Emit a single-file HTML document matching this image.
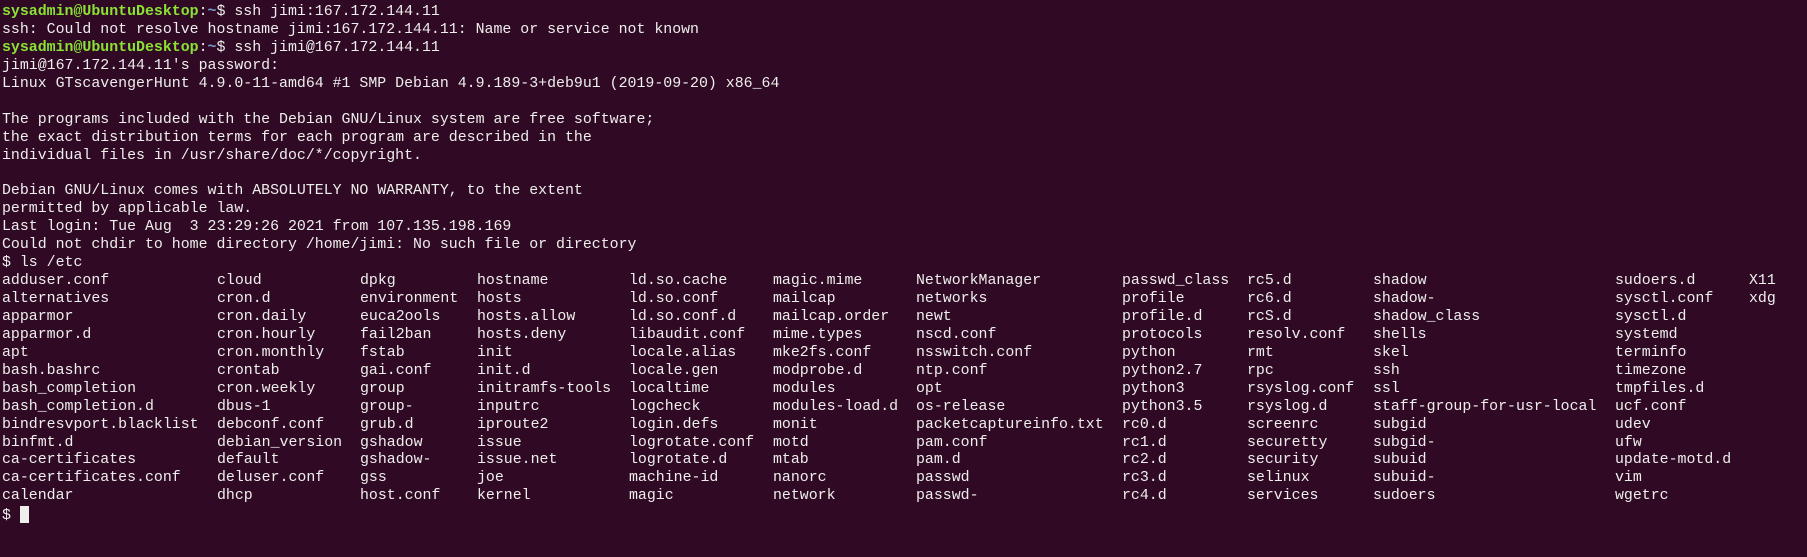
<!DOCTYPE html>
<html><head><meta charset="utf-8"><style>
html,body{margin:0;padding:0;background:#300a24;width:1807px;height:557px;overflow:hidden}
.t{position:absolute;left:2px;top:4px;font-family:"Liberation Mono",monospace;font-size:14.9px;line-height:17.95px;color:#eeeeec}
.t>div{white-space:pre;height:17.95px;position:relative}
.g{color:#8ae234;font-weight:bold}.b{color:#729fcf;font-weight:bold}
.r span{position:absolute;top:0}
.cur{display:inline-block;width:9px;height:17px;background:#eeeeec;vertical-align:-4px}
</style></head><body><div class="t"><div><span class="g">sysadmin@UbuntuDesktop</span>:<span class="b">~</span>$ ssh jimi:167.172.144.11</div><div>ssh: Could not resolve hostname jimi:167.172.144.11: Name or service not known</div><div><span class="g">sysadmin@UbuntuDesktop</span>:<span class="b">~</span>$ ssh jimi@167.172.144.11</div><div>jimi@167.172.144.11's password: </div><div>Linux GTscavengerHunt 4.9.0-11-amd64 #1 SMP Debian 4.9.189-3+deb9u1 (2019-09-20) x86_64</div><div> </div><div>The programs included with the Debian GNU/Linux system are free software;</div><div>the exact distribution terms for each program are described in the</div><div>individual files in /usr/share/doc/*/copyright.</div><div> </div><div>Debian GNU/Linux comes with ABSOLUTELY NO WARRANTY, to the extent</div><div>permitted by applicable law.</div><div>Last login: Tue Aug  3 23:29:26 2021 from 107.135.198.169</div><div>Could not chdir to home directory /home/jimi: No such file or directory</div><div>$ ls /etc</div>
<div class="r"><span style="left:0">adduser.conf</span><span style="left:215px">cloud</span><span style="left:358px">dpkg</span><span style="left:475px">hostname</span><span style="left:627px">ld.so.cache</span><span style="left:771px">magic.mime</span><span style="left:914px">NetworkManager</span><span style="left:1120px">passwd_class</span><span style="left:1245px">rc5.d</span><span style="left:1371px">shadow</span><span style="left:1613px">sudoers.d</span><span style="left:1747px">X11</span></div>
<div class="r"><span style="left:0">alternatives</span><span style="left:215px">cron.d</span><span style="left:358px">environment</span><span style="left:475px">hosts</span><span style="left:627px">ld.so.conf</span><span style="left:771px">mailcap</span><span style="left:914px">networks</span><span style="left:1120px">profile</span><span style="left:1245px">rc6.d</span><span style="left:1371px">shadow-</span><span style="left:1613px">sysctl.conf</span><span style="left:1747px">xdg</span></div>
<div class="r"><span style="left:0">apparmor</span><span style="left:215px">cron.daily</span><span style="left:358px">euca2ools</span><span style="left:475px">hosts.allow</span><span style="left:627px">ld.so.conf.d</span><span style="left:771px">mailcap.order</span><span style="left:914px">newt</span><span style="left:1120px">profile.d</span><span style="left:1245px">rcS.d</span><span style="left:1371px">shadow_class</span><span style="left:1613px">sysctl.d</span></div>
<div class="r"><span style="left:0">apparmor.d</span><span style="left:215px">cron.hourly</span><span style="left:358px">fail2ban</span><span style="left:475px">hosts.deny</span><span style="left:627px">libaudit.conf</span><span style="left:771px">mime.types</span><span style="left:914px">nscd.conf</span><span style="left:1120px">protocols</span><span style="left:1245px">resolv.conf</span><span style="left:1371px">shells</span><span style="left:1613px">systemd</span></div>
<div class="r"><span style="left:0">apt</span><span style="left:215px">cron.monthly</span><span style="left:358px">fstab</span><span style="left:475px">init</span><span style="left:627px">locale.alias</span><span style="left:771px">mke2fs.conf</span><span style="left:914px">nsswitch.conf</span><span style="left:1120px">python</span><span style="left:1245px">rmt</span><span style="left:1371px">skel</span><span style="left:1613px">terminfo</span></div>
<div class="r"><span style="left:0">bash.bashrc</span><span style="left:215px">crontab</span><span style="left:358px">gai.conf</span><span style="left:475px">init.d</span><span style="left:627px">locale.gen</span><span style="left:771px">modprobe.d</span><span style="left:914px">ntp.conf</span><span style="left:1120px">python2.7</span><span style="left:1245px">rpc</span><span style="left:1371px">ssh</span><span style="left:1613px">timezone</span></div>
<div class="r"><span style="left:0">bash_completion</span><span style="left:215px">cron.weekly</span><span style="left:358px">group</span><span style="left:475px">initramfs-tools</span><span style="left:627px">localtime</span><span style="left:771px">modules</span><span style="left:914px">opt</span><span style="left:1120px">python3</span><span style="left:1245px">rsyslog.conf</span><span style="left:1371px">ssl</span><span style="left:1613px">tmpfiles.d</span></div>
<div class="r"><span style="left:0">bash_completion.d</span><span style="left:215px">dbus-1</span><span style="left:358px">group-</span><span style="left:475px">inputrc</span><span style="left:627px">logcheck</span><span style="left:771px">modules-load.d</span><span style="left:914px">os-release</span><span style="left:1120px">python3.5</span><span style="left:1245px">rsyslog.d</span><span style="left:1371px">staff-group-for-usr-local</span><span style="left:1613px">ucf.conf</span></div>
<div class="r"><span style="left:0">bindresvport.blacklist</span><span style="left:215px">debconf.conf</span><span style="left:358px">grub.d</span><span style="left:475px">iproute2</span><span style="left:627px">login.defs</span><span style="left:771px">monit</span><span style="left:914px">packetcaptureinfo.txt</span><span style="left:1120px">rc0.d</span><span style="left:1245px">screenrc</span><span style="left:1371px">subgid</span><span style="left:1613px">udev</span></div>
<div class="r"><span style="left:0">binfmt.d</span><span style="left:215px">debian_version</span><span style="left:358px">gshadow</span><span style="left:475px">issue</span><span style="left:627px">logrotate.conf</span><span style="left:771px">motd</span><span style="left:914px">pam.conf</span><span style="left:1120px">rc1.d</span><span style="left:1245px">securetty</span><span style="left:1371px">subgid-</span><span style="left:1613px">ufw</span></div>
<div class="r"><span style="left:0">ca-certificates</span><span style="left:215px">default</span><span style="left:358px">gshadow-</span><span style="left:475px">issue.net</span><span style="left:627px">logrotate.d</span><span style="left:771px">mtab</span><span style="left:914px">pam.d</span><span style="left:1120px">rc2.d</span><span style="left:1245px">security</span><span style="left:1371px">subuid</span><span style="left:1613px">update-motd.d</span></div>
<div class="r"><span style="left:0">ca-certificates.conf</span><span style="left:215px">deluser.conf</span><span style="left:358px">gss</span><span style="left:475px">joe</span><span style="left:627px">machine-id</span><span style="left:771px">nanorc</span><span style="left:914px">passwd</span><span style="left:1120px">rc3.d</span><span style="left:1245px">selinux</span><span style="left:1371px">subuid-</span><span style="left:1613px">vim</span></div>
<div class="r"><span style="left:0">calendar</span><span style="left:215px">dhcp</span><span style="left:358px">host.conf</span><span style="left:475px">kernel</span><span style="left:627px">magic</span><span style="left:771px">network</span><span style="left:914px">passwd-</span><span style="left:1120px">rc4.d</span><span style="left:1245px">services</span><span style="left:1371px">sudoers</span><span style="left:1613px">wgetrc</span></div>
<div>$ <span class="cur"></span></div>
</div></body></html>
